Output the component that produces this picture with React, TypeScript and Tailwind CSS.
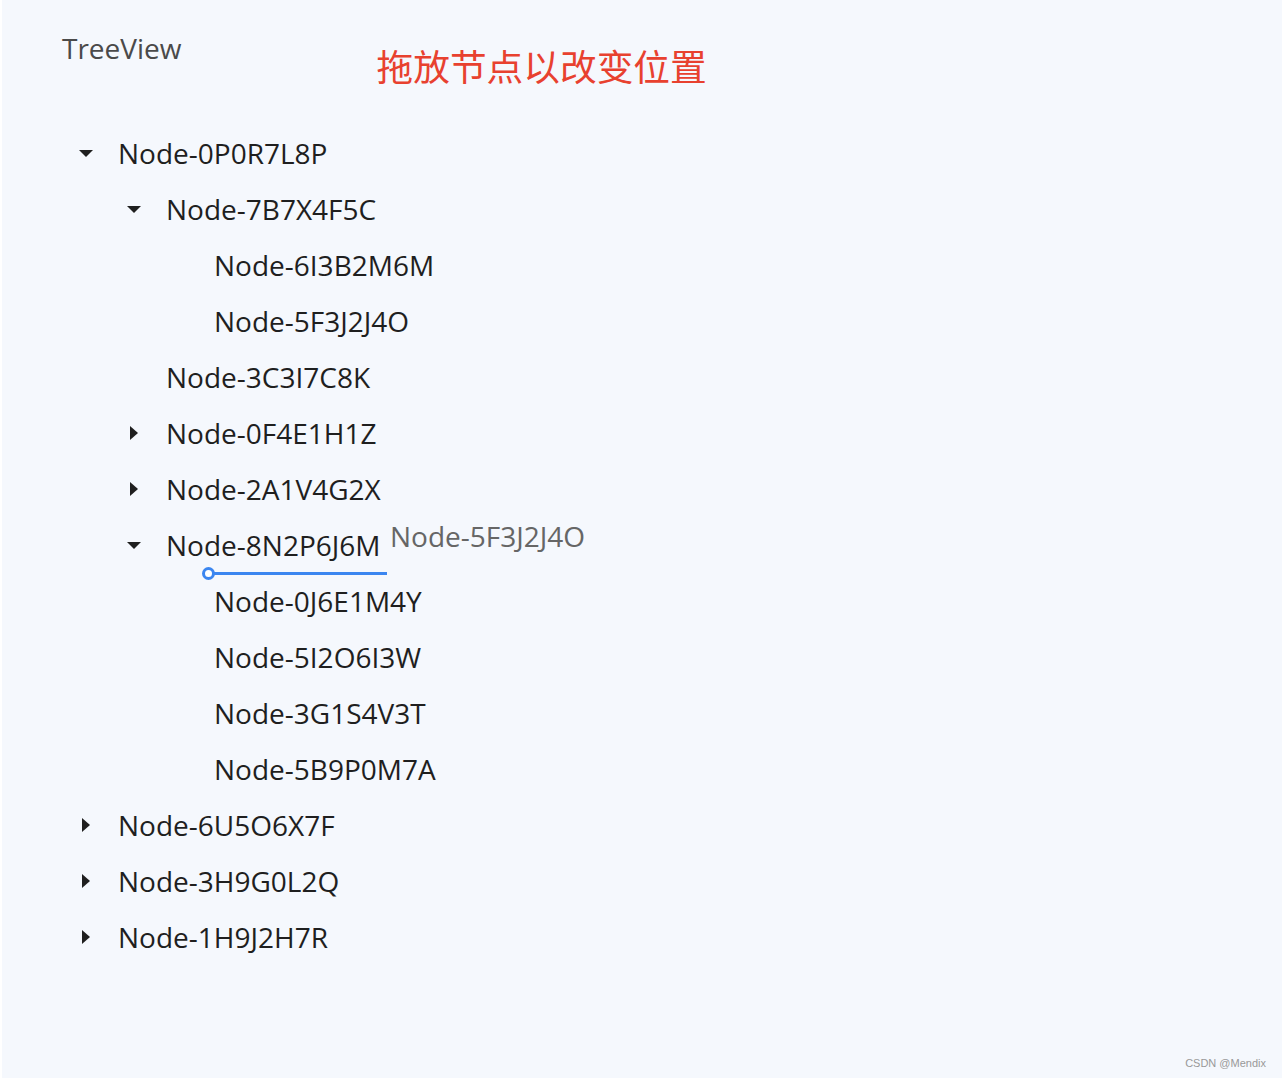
import React from "react";

type Row = {
  label: string;
  level: number;
  arrow?: "down" | "right";
};

const rows: Row[] = [
  { label: "Node-0P0R7L8P", level: 0, arrow: "down" },
  { label: "Node-7B7X4F5C", level: 1, arrow: "down" },
  { label: "Node-6I3B2M6M", level: 2 },
  { label: "Node-5F3J2J4O", level: 2 },
  { label: "Node-3C3I7C8K", level: 1 },
  { label: "Node-0F4E1H1Z", level: 1, arrow: "right" },
  { label: "Node-2A1V4G2X", level: 1, arrow: "right" },
  { label: "Node-8N2P6J6M", level: 1, arrow: "down" },
  { label: "Node-0J6E1M4Y", level: 2 },
  { label: "Node-5I2O6I3W", level: 2 },
  { label: "Node-3G1S4V3T", level: 2 },
  { label: "Node-5B9P0M7A", level: 2 },
  { label: "Node-6U5O6X7F", level: 0, arrow: "right" },
  { label: "Node-3H9G0L2Q", level: 0, arrow: "right" },
  { label: "Node-1H9J2H7R", level: 0, arrow: "right" },
];

const indent = ["pl-[76px]", "pl-[124px]", "pl-[172px]"];

const Caret = ({ dir }: { dir?: "down" | "right" }) => {
  if (dir === "down")
    return (
      <svg width="14" height="7" viewBox="0 0 14 7">
        <path d="M0 0H14L7 7Z" fill="#1f1f1f" />
      </svg>
    );
  if (dir === "right")
    return (
      <svg width="8" height="14" viewBox="0 0 8 14">
        <path d="M0 0V14L8 7Z" fill="#1f1f1f" />
      </svg>
    );
  return null;
};

const TreeRow = ({ row, dragOver }: { row: Row; dragOver?: boolean }) => (
  <div className={`relative flex h-14 items-center ${indent[row.level]}`}>
    <div className="flex w-4 shrink-0 items-center justify-center">
      <Caret dir={row.arrow} />
    </div>
    <span className="ml-[24px] text-[28px] leading-none text-[#1f1f1f]">{row.label}</span>
    {dragOver && (
      <>
        <span className="absolute left-[388px] top-[5px] text-[28px] leading-none text-[#666]">
          Node-5F3J2J4O
        </span>
        <div className="absolute left-[200px] top-[50px] flex items-center">
          <div className="h-[13px] w-[13px] rounded-full border-[3px] border-[#3b86f0] bg-white" />
          <div className="-ml-[1px] h-[3px] w-[173px] bg-[#3b86f0]" />
        </div>
      </>
    )}
  </div>
);

export default function App() {
  return (
    <div
      className="relative h-[1078px] w-full border-l-2 border-white bg-[#f5f8fd]"
      style={{ fontFamily: '"Open Sans", "Noto Sans", sans-serif' }}
    >
      <div className="flex items-start pl-[60px] pt-[31px]">
        <h1 className="text-[28px] leading-[34px] text-[#4a4a4a]">TreeView</h1>
        <p
          className="ml-[195px] mt-[12px] text-[36.7px] leading-[44px] text-[#e8412f]"
          style={{ fontFamily: '"Noto Sans CJK SC", sans-serif' }}
        >
          拖放节点以改变位置
        </p>
      </div>
      <div className="mt-[38px]">
        {rows.map((r, i) => (
          <TreeRow key={i} row={r} dragOver={r.label === "Node-8N2P6J6M"} />
        ))}
      </div>
      <span
        className="absolute bottom-[7px] right-[16px] text-[11px] text-[#999]"
        style={{ fontFamily: '"Liberation Sans", Arial, sans-serif' }}
      >
        CSDN @Mendix
      </span>
    </div>
  );
}
